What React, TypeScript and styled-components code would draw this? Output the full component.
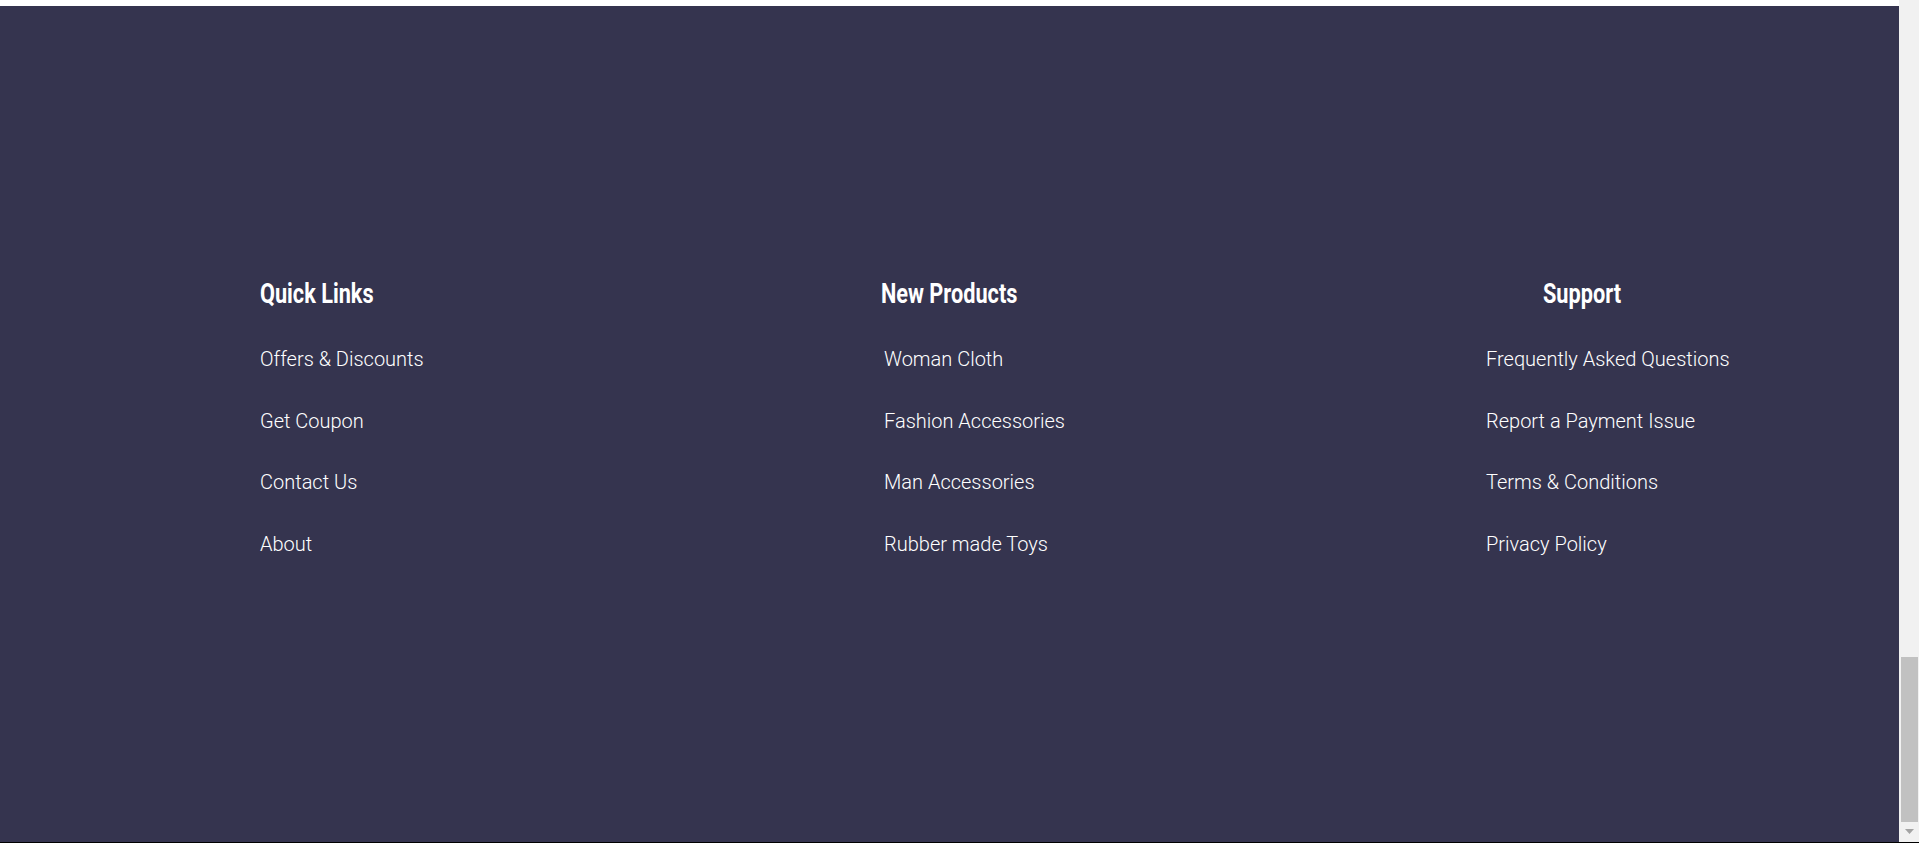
import React from "react";
import styled, { createGlobalStyle } from "styled-components";

const GlobalStyle = createGlobalStyle`
  html, body { margin: 0; padding: 0; overflow: hidden; }
  body { background: #ffffff; }
  * { box-sizing: border-box; }
`;

const Page = styled.div`
  width: 1919px;
  height: 843px;
  display: flex;
  flex-direction: column;
`;

const Window = styled.div`
  flex: 1;
  display: flex;
  min-height: 0;
`;

const Main = styled.div`
  flex: 1;
  display: flex;
  flex-direction: column;
`;

const TopStrip = styled.div`
  height: 6px;
  background: #ffffff;
`;

const Footer = styled.footer`
  flex: 1;
  background: #35344f;
  padding: 272px 0 0 260px;
  display: flex;
`;

const Column = styled.div<{ $width?: number }>`
  display: flex;
  flex-direction: column;
  align-items: flex-start;
  width: ${(p) => (p.$width ? `${p.$width}px` : "auto")};
  flex: ${(p) => (p.$width ? "none" : "1")};
`;

const Heading = styled.h3<{ $indent?: number }>`
  margin: 0 0 0 ${(p) => p.$indent ?? 0}px;
  font-family: Roboto, "Liberation Sans", sans-serif;
  font-weight: 700;
  font-size: 28px;
  line-height: 32px;
  color: #ffffff;
  white-space: nowrap;
  transform: scaleX(0.775);
  transform-origin: left center;
`;

const LinkList = styled.ul<{ $indent?: number }>`
  list-style: none;
  margin: 37px 0 0 ${(p) => p.$indent ?? 0}px;
  padding: 0;
  display: flex;
  flex-direction: column;
  gap: 37.6px;
`;

const LinkItem = styled.li`
  font-family: Roboto, "Liberation Sans", sans-serif;
  font-weight: 300;
  font-size: 20px;
  line-height: 24px;
  color: #ffffff;
  white-space: nowrap;
`;

const Scrollbar = styled.div`
  width: 20px;
  background: #f1f1f1;
  display: flex;
  flex-direction: column;
  align-items: flex-start;
  padding: 657px 1px 0 2px;
`;

const Thumb = styled.div`
  width: 17px;
  height: 165px;
  background: #c1c1c1;
`;

const ArrowBox = styled.div`
  width: 17px;
  height: 14px;
  display: flex;
  align-items: flex-start;
  justify-content: center;
  padding-top: 7px;
`;

const BottomLine = styled.div`
  height: 1px;
  background: #000000;
`;

const columns = [
  {
    title: "Quick Links",
    width: 622,
    headIndent: 0,
    listIndent: 0,
    links: ["Offers & Discounts", "Get Coupon", "Contact Us", "About"],
  },
  {
    title: "New Products",
    width: 604,
    headIndent: -1,
    listIndent: 2,
    links: ["Woman Cloth", "Fashion Accessories", "Man Accessories", "Rubber made Toys"],
  },
  {
    title: "Support",
    width: 0,
    headIndent: 57,
    listIndent: 0,
    links: [
      "Frequently Asked Questions",
      "Report a Payment Issue",
      "Terms & Conditions",
      "Privacy Policy",
    ],
  },
];

export default function App() {
  return (
    <>
      <GlobalStyle />
      <Page>
        <Window>
          <Main>
            <TopStrip />
            <Footer>
              {columns.map((c) => (
                <Column key={c.title} $width={c.width || undefined}>
                  <Heading $indent={c.headIndent}>{c.title}</Heading>
                  <LinkList $indent={c.listIndent}>
                    {c.links.map((l) => (
                      <LinkItem key={l}>{l}</LinkItem>
                    ))}
                  </LinkList>
                </Column>
              ))}
            </Footer>
          </Main>
          <Scrollbar>
            <Thumb />
            <ArrowBox>
              <svg width="9" height="5" viewBox="0 0 9 5">
                <polygon points="0,0 9,0 4.5,5" fill="#a3a3a3" />
              </svg>
            </ArrowBox>
          </Scrollbar>
        </Window>
        <BottomLine />
      </Page>
    </>
  );
}
